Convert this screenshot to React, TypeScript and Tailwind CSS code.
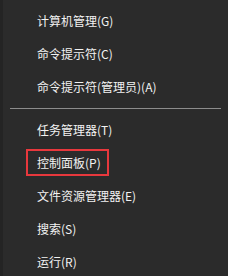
import React from 'react';

const groupA = ['计算机管理(G)', '命令提示符(C)', '命令提示符(管理员)(A)'];
const groupB = ['任务管理器(T)', '控制面板(P)', '文件资源管理器(E)', '搜索(S)', '运行(R)'];

const MenuRow: React.FC<{ label: string; marked?: boolean }> = ({ label, marked }) => (
  <div className="h-[33px] flex items-center pl-[34px]">
    {marked ? (
      <span className="-ml-[11px] h-[27px] w-[83px] flex items-center pl-[9px] border-2 border-[#e8383d]">
        {label}
      </span>
    ) : (
      <span>{label}</span>
    )}
  </div>
);

export default function App() {
  return (
    <div
      className="w-[228px] h-[276px] bg-[#2b2b2b] flex text-[12px] text-[#f2f2f2]"
      style={{ fontFamily: '"Noto Sans CJK SC", "Liberation Sans", sans-serif' }}
    >
      <div className="w-[3px] bg-[#242424]" />
      <div className="flex-1 pt-[4px]">
        {groupA.map((l) => (
          <MenuRow key={l} label={l} />
        ))}
        <div className="h-[10px] flex items-center pl-[7px] pr-[7px]">
          <div className="h-px w-full bg-[#8c8c8c]" />
        </div>
        {groupB.map((l) => (
          <MenuRow key={l} label={l} marked={l === '控制面板(P)'} />
        ))}
      </div>
    </div>
  );
}
